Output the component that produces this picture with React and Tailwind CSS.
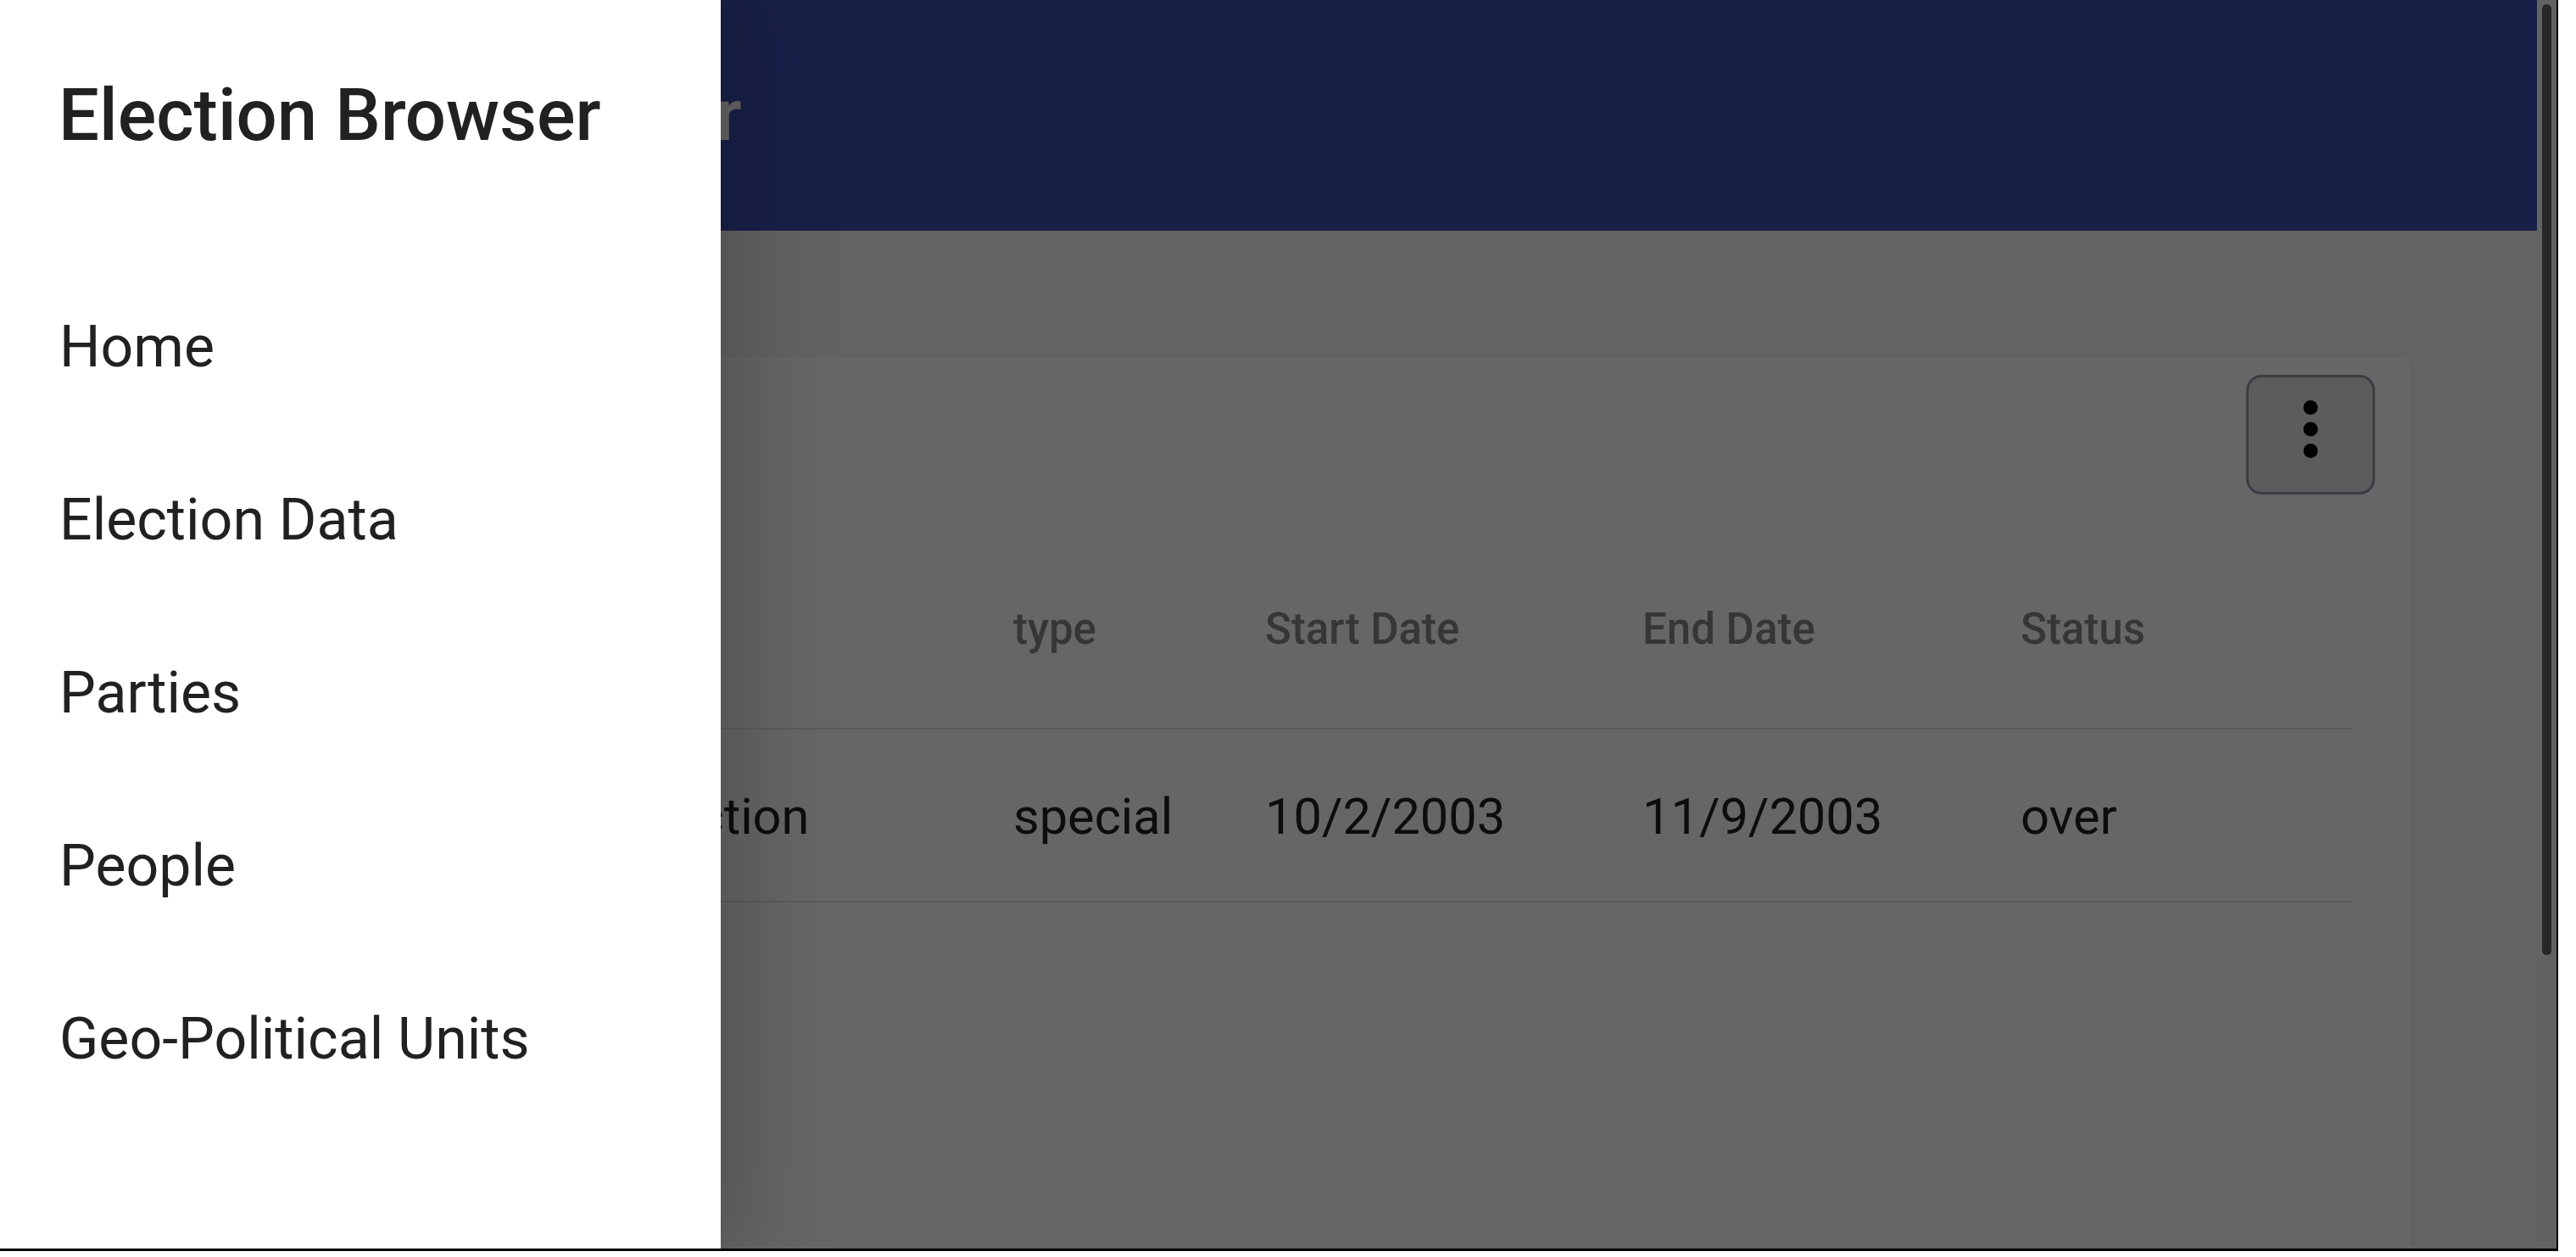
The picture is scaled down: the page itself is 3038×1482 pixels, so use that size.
import React from "react";

const navItems = ["Home", "Election Data", "Parties", "People", "Geo-Political Units"];

const columns = ["Name", "type", "Start Date", "End Date", "Status"];
const rows = [["California Recall Election", "special", "10/2/2003", "11/9/2003", "over"]];

function MoreVert() {
  return (
    <svg viewBox="0 0 24 24" className="w-[102px] h-[102px]" fill="#000">
      <circle cx="12" cy="6" r="2" />
      <circle cx="12" cy="12" r="2" />
      <circle cx="12" cy="18" r="2" />
    </svg>
  );
}

function MenuIcon() {
  return (
    <svg viewBox="0 0 24 24" className="w-[86px] h-[86px]" fill="#fff">
      <path d="M3 18h18v-2H3v2zm0-5h18v-2H3v2zm0-7v2h18V6H3z" />
    </svg>
  );
}

function Drawer() {
  return (
    <div className="absolute left-0 top-0 bottom-0 w-[850px] bg-white text-[#212121] shadow-[0_0_110px_20px_rgba(0,0,0,0.22)]">
      <div className="h-[272px] flex items-center pl-[69px]">
        <h1 className="text-[85px] font-medium leading-none">Election Browser</h1>
      </div>
      <nav className="pt-[35px]">
        {navItems.map((item) => (
          <div key={item} className="h-[204px] flex items-center pl-[70px] text-[68px] leading-none">
            {item}
          </div>
        ))}
      </nav>
    </div>
  );
}

function ElectionTable() {
  const grid = "grid grid-cols-[977px_297px_445px_446px_1fr]";
  return (
    <div className="mx-[69px] mt-[41px]">
      <div className={`${grid} h-[236px] items-center border-b-2 border-[#e0e0e0] text-[51px] font-medium leading-none text-[#878787]`}>
        {columns.map((c, i) => (
          <div key={c} className={i === 0 ? "pl-[96px]" : ""}>{c}</div>
        ))}
      </div>
      {rows.map((r, ri) => (
        <div key={ri} className={`${grid} h-[204px] pt-[6px] items-center border-b-2 border-[#e0e0e0] text-[59.5px] leading-none text-[#212121]`}>
          {r.map((v, i) => (
            <div key={i} className={i === 0 ? "pl-[80px] whitespace-nowrap" : ""}>{v}</div>
          ))}
        </div>
      ))}
    </div>
  );
}

export default function App() {
  return (
    <div className="w-[3038px] h-[1482px] bg-white overflow-hidden font-['Roboto','Liberation_Sans',sans-serif]">
      <div className="w-[3017px] h-[1475px] flex border-r-2 border-b-[3px] border-black">
        <div className="relative flex-1 flex flex-col bg-[#f7f7f7] overflow-hidden">
          <header className="h-[272px] shrink-0 bg-[#3f51b5] flex items-center pl-[58px] gap-[91px] text-white">
            <MenuIcon />
            <span className="text-[85px] font-medium leading-none">Election Browser</span>
          </header>
          <main className="flex-1 px-[149px] pt-[149px]">
            <div className="bg-white rounded-[10px] shadow-[0_2px_4px_rgba(0,0,0,0.12)] min-h-[1300px]">
              <div className="flex justify-end pt-[21px] pr-[42px]">
                <button className="w-[152px] h-[141px] rounded-[18px] border-[3px] border-[#9696aa] bg-[#e6e6e6] flex items-center justify-center pb-[14px]">
                  <MoreVert />
                </button>
              </div>
              <ElectionTable />
            </div>
          </main>
          <div className="absolute inset-0 bg-black/60" />
          <Drawer />
        </div>
        <div className="w-[23px] shrink-0 bg-[#626262] px-[6px] pt-[5px]">
          <div className="w-[11px] h-[1121px] rounded-full bg-[#272727]" />
        </div>
      </div>
    </div>
  );
}
